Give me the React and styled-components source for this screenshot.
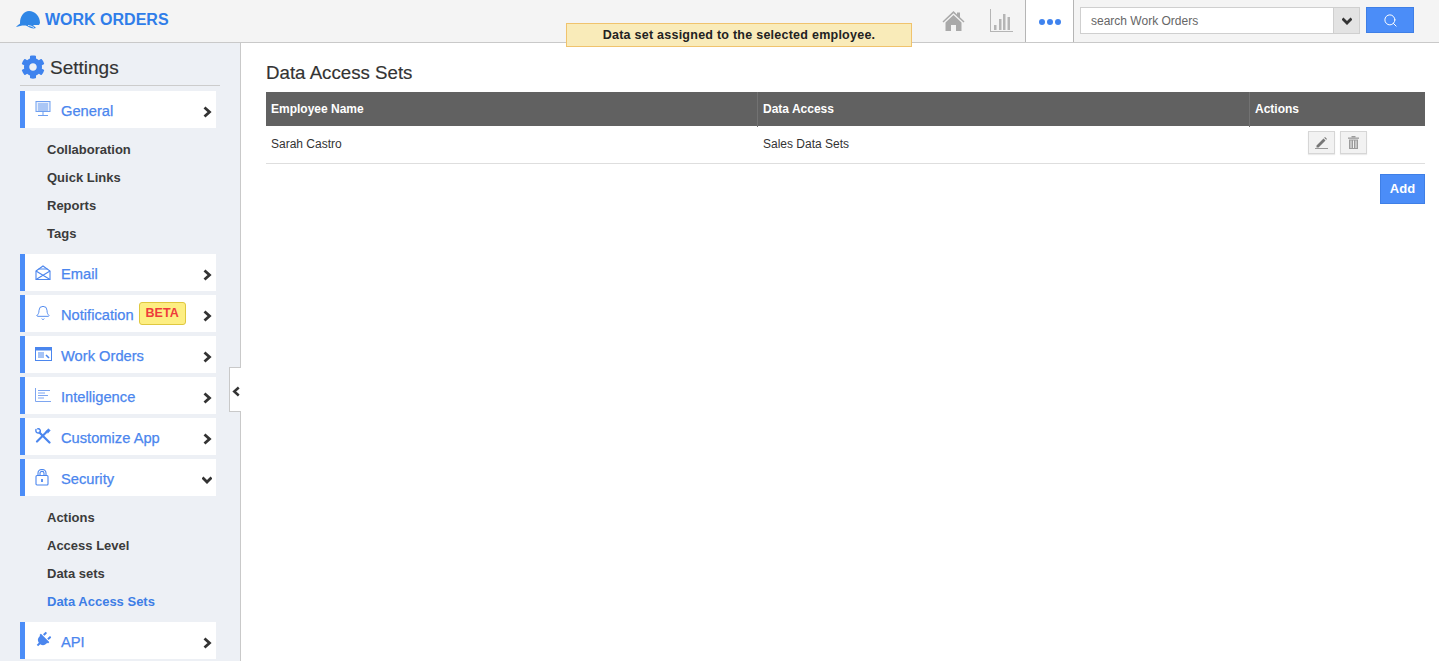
import React from "react";
import styled, { createGlobalStyle } from "styled-components";
import { FaCog, FaPlug } from "react-icons/fa";
import { Bell, Search } from "lucide-react";

const Global = createGlobalStyle`
  html, body { margin: 0; padding: 0; height: 100%; overflow: hidden; background: #fff; }
  * { box-sizing: border-box; }
  body { font-family: "Liberation Sans", Arial, sans-serif; color: #333; }
`;

const Page = styled.div`
  position: relative;
  width: 1439px;
  height: 661px;
  overflow: hidden;
  display: flex;
  flex-direction: column;
`;
const Header = styled.header`
  height: 43px;
  flex: none;
  background: #f4f4f4;
  border-bottom: 1px solid #c9c9c9;
  display: flex;
  align-items: stretch;
  padding-left: 16px;
`;
const Brand = styled.div`
  display: flex;
  align-items: center;
  gap: 4px;
  color: #2f7de9;
  font-size: 16px;
  font-weight: 700;
  height: 40px;
  flex: 1;
`;
const HeadIcon = styled.div`
  width: 48px;
  display: flex;
  align-items: center;
  justify-content: center;
  padding: 0 0 1px 3px;
`;
const MoreTab = styled.div`
  width: 49px;
  margin-left: 1px;
  height: 42px;
  background: #fff;
  border-left: 1px solid #b5b5b5;
  border-right: 1px solid #b5b5b5;
  display: flex;
  align-items: center;
  justify-content: center;
  gap: 2px;
  padding-top: 2px;
`;
const Dot = styled.i`
  width: 6px;
  height: 6px;
  border-radius: 50%;
  background: #3f83ee;
`;
const SearchArea = styled.div`
  display: flex;
  align-items: flex-start;
  padding: 7px 25px 0 6px;
`;
const SearchInput = styled.div`
  width: 253px;
  height: 27px;
  background: #fff;
  border: 1px solid #cfcfcf;
  border-right: none;
  color: #666;
  font-size: 12px;
  line-height: 27px;
  padding-left: 10px;
`;
const SelectBtn = styled.div`
  width: 27px;
  height: 27px;
  background: #e3e3e3;
  border: 1px solid #cfcfcf;
  display: flex;
  align-items: center;
  justify-content: center;
`;
const SearchBtn = styled.div`
  width: 48px;
  height: 26px;
  margin-left: 6px;
  background: #4b8df8;
  border: 1px solid #3f7fe6;
  display: flex;
  align-items: center;
  justify-content: center;
`;
const Toast = styled.div`
  position: absolute;
  left: 566px;
  top: 23px;
  width: 346px;
  height: 24px;
  background: #f9ebb9;
  border: 1px solid #f0c36d;
  color: #222;
  font-size: 12.5px;
  font-weight: 700;
  letter-spacing: 0.25px;
  line-height: 22px;
  text-align: center;
`;
const Body = styled.div`
  flex: 1;
  display: flex;
  min-height: 0;
`;
const Sidebar = styled.aside`
  position: relative;
  width: 241px;
  flex: none;
  background: #edf0f5;
  border-right: 1px solid #c9c9c9;
  padding: 0 20px 0 20px;
`;
const SideTitle = styled.div`
  height: 43px;
  width: 200px;
  border-bottom: 1px solid #ccc;
  display: flex;
  align-items: center;
  gap: 5px;
  font-size: 19px;
  color: #333;
  -webkit-text-stroke: 0.15px #333;
  margin-bottom: 5px;
  padding: 8px 0 0 1px;
`;
const Gear = styled(FaCog)`
  margin-top: -3px;
`;
const NavItem = styled.div`
  width: 196px;
  height: 37px;
  margin-bottom: 4px;
  background: #fff;
  border-left: 5px solid #4b8df8;
  display: flex;
  align-items: center;
  color: #4b86ee;
  font-size: 14.7px;
  padding-top: 2px;
  -webkit-text-stroke: 0.25px #4b86ee;
  position: relative;
`;
const NavIcon = styled.span`
  width: 36px;
  flex: none;
  padding-left: 10px;
  margin-top: -3px;
  display: flex;
  align-items: center;
`;
const Chevron = styled.span`
  position: absolute;
  right: 4px;
  top: 15px;
  display: flex;
`;
const Beta = styled.span`
  margin: -2px 0 0 5px;
  width: 47px;
  height: 23px;
  background: #fdee82;
  border: 1px solid #dfc83f;
  border-radius: 3px;
  color: #ee3b3b;
  -webkit-text-stroke: 0;
  font-size: 12.5px;
  font-weight: 700;
  text-align: center;
  line-height: 21px;
`;
const SubList = styled.div`
  padding: 3px 0 7px 27px;
`;
const SubLink = styled.div`
  height: 28px;
  line-height: 30px;
  font-size: 13px;
  font-weight: 700;
  color: ${p => (p.$active ? "#3d7ee6" : "#3b3b3b")};
`;
const Collapse = styled.div`
  position: absolute;
  right: -1px;
  top: 324px;
  width: 12px;
  height: 45px;
  background: #fff;
  border: 1px solid #c9c9c9;
  border-right: none;
  padding: 4px 0 0 1px;
  display: flex;
  align-items: center;
  justify-content: center;
`;
const Main = styled.main`
  flex: 1;
  padding: 20px 14px 0 25px;
`;
const Title = styled.h1`
  margin: 0;
  height: 29px;
  font-size: 18.7px;
  line-height: 20px;
  font-weight: 400;
  color: #333;
  -webkit-text-stroke: 0.15px #333;
`;
const Row = styled.div`
  display: grid;
  grid-template-columns: 492px 492px 1fr;
`;
const HeadRow = styled(Row)`
  height: 34px;
  background: #616161;
`;
const HeadCell = styled.div`
  color: #fff;
  font-size: 12px;
  font-weight: 700;
  line-height: 35px;
  padding-left: 5px;
  border-right: 1px solid ${p => (p.$last ? "transparent" : "#727272")};
`;
const DataRow = styled(Row)`
  height: 38px;
  border-bottom: 1px solid #dedede;
`;
const DataCell = styled.div`
  font-size: 12px;
  color: #333;
  line-height: 37px;
  padding-left: 5px;
`;
const Actions = styled.div`
  display: flex;
  gap: 5px;
  padding: 5px 0 0 58px;
`;
const IconBtn = styled.div`
  width: 27px;
  height: 23px;
  background: #f2f2f2;
  border: 1px solid #d6d6d6;
  box-shadow: 0 1px 1px rgba(0,0,0,.08);
  display: flex;
  align-items: center;
  justify-content: center;
`;
const Footer = styled.div`
  display: flex;
  justify-content: flex-end;
  padding-top: 10px;
`;
const AddBtn = styled.div`
  width: 45px;
  height: 30px;
  background: #4b8df8;
  border: 1px solid #3f7fe6;
  color: #fff;
  font-size: 13px;
  font-weight: 700;
  line-height: 28px;
  text-align: center;
`;

const Chev = ({ dir = "right", w = 10, color = "#333" }) => (
  <svg width={w} height={w + 2} viewBox="0 0 10 12" fill="none" stroke={color} strokeWidth="2.8">
    {dir === "right" && <path d="M2.500 1.500 7.500 6l-5 4.500" />}
    {dir === "left" && <path d="M7.500 1.500 2.500 6l5 4.500" />}
    {dir === "down" && <path d="M.5 3.500 5 8l4.500-4.500" />}
  </svg>
);
const Logo = () => (
  <svg width="25" height="20" viewBox="0 0 25 20">
    <path d="M4 13C4 6 8 1 13 1c6 0 11 5 11 12l-1 2-7 0c-4-1-8-1-12 0z" fill="#2f86e6" />
    <path d="M5 13c-2 1-4 3-5 4 4-1 8-2 11-1 3 2 6 3 9 2l-3-3c-4-2-8-3-12-2z" fill="#2f86e6" />
    <path d="M12 15.500c2 0 4 1 6 2" stroke="#fff" strokeWidth=".8" fill="none" />
  </svg>
);
const Home = () => (
  <svg width="23" height="22" viewBox="0 0 23 22" fill="#a9a9a9">
    <path d="M11.500 1 0.500 11.500l1 1L11.500 3.200l10 9.300 1-1L18 7.200V2.500h-3v1.900z" />
    <path d="M3.500 12.500 11.500 5l8 7.500V21h-5.500v-6h-5v6H3.500z" />
  </svg>
);
const Chart = () => (
  <svg width="23" height="23" viewBox="0 0 23 23" fill="#b5b5b5">
    <rect x="0" y="0" width="1" height="23" />
    <rect x="0" y="22" width="23" height="1" />
    <rect x="4" y="16" width="2.500" height="5" />
    <rect x="9" y="10" width="2.500" height="11" />
    <rect x="13" y="5" width="2.500" height="16" />
    <rect x="17.500" y="8" width="2.500" height="13" />
  </svg>
);
const Monitor = () => (
  <svg width="16" height="16" viewBox="0 0 16 16" fill="none" stroke="#6f9ff0" strokeWidth="1">
    <rect x="1" y=".5" width="14" height="10" fill="#e6eefc" />
    <path d="M3 3h10M3 5h10M3 7h10M3 9h10M8 11v3M3 14.500h10" />
  </svg>
);
const Mail = () => (
  <svg width="16" height="15" viewBox="0 0 16 15" fill="none" stroke="#4b86ee" strokeWidth="1.100">
    <path d="M1 6 8 1l7 5v8.500H1z" />
    <path d="M1 6l14 8.500M15 6 1 14.500M3.500 4h9" />
  </svg>
);
const Browser = () => (
  <svg width="17" height="14" viewBox="0 0 17 14" fill="none" stroke="#4b86ee">
    <rect x=".5" y=".5" width="16" height="13" />
    <rect x="1" y="1" width="15" height="2" fill="#4b86ee" />
    <path d="M3 6h6M3 8h6M3 10h6" />
    <path d="M11 8l3 3" strokeWidth="1.600" />
  </svg>
);
const Lines = () => (
  <svg width="16" height="14" viewBox="0 0 16 14" fill="none" stroke="#7ea6f0">
    <path d="M.5 0v13.500H16M3 2.500h12M3 5h7M3 7.500h10M3 10h6" />
  </svg>
);
const Tools = () => (
  <svg width="16" height="16" viewBox="0 0 16 16" fill="none" stroke="#4b86ee" strokeLinecap="round">
    <path d="M4.500 4.500 14.500 14.500" strokeWidth="2.200" />
    <path d="M1 1.500c-.5 2 .5 4 3.500 3.500M2.800.8C4.800.5 6 2.500 5 4.500" strokeWidth="1.400" />
    <path d="M11.500 4 2 13.500" strokeWidth="2.200" />
    <path d="M11 3 13.500.8 15.200 2.500 13 5z" fill="#4b86ee" strokeWidth=".6" />
  </svg>
);
const LockIcon = () => (
  <svg width="14" height="17" viewBox="0 0 14 17" fill="none" stroke="#4b86ee" strokeWidth="1.100">
    <rect x="1" y="6.500" width="12" height="9.500" rx="1" />
    <path d="M3 6.500V4a4 3.500 0 0 1 8 0v2.500M5 6.500V4.200a2 1.800 0 0 1 4 0v2.300" />
    <path d="M7 10v3" strokeWidth="1.800" />
  </svg>
);
const Pencil = () => (
  <svg width="13" height="13" viewBox="0 0 13 13" fill="#777">
    <path d="M1.500 9.500 8.500 2.500l2 2-7 7H1.500zM9.200 1.800l.8-.8 2 2-.8.800z" />
    <rect x="0" y="12" width="13" height="1" fill="#999" />
  </svg>
);
const Trash = () => (
  <svg width="11" height="13" viewBox="0 0 11 13" fill="#9b9b9b">
    <rect x="0" y="1.500" width="11" height="1.300" />
    <rect x="3.500" y="0" width="4" height="1.500" />
    <path d="M1 3.500h9V13H1zM2.500 4.500v7.500h1V4.500zM5 4.500v7.500h1V4.500zM7.500 4.500v7.500h1V4.500z" fillRule="evenodd" />
  </svg>
);

const NAV = (icon, label, extra, dir = "right") => (
  <NavItem key={label}>
    <NavIcon>{icon}</NavIcon>
    {label}
    {extra}
    <Chevron><Chev dir={dir} /></Chevron>
  </NavItem>
);

export default function App() {
  return (
    <Page>
      <Global />
      <Header>
        <Brand><Logo /><span>WORK ORDERS</span></Brand>
        <HeadIcon><Home /></HeadIcon>
        <HeadIcon><Chart /></HeadIcon>
        <MoreTab><Dot /><Dot /><Dot /></MoreTab>
        <SearchArea>
          <SearchInput>search Work Orders</SearchInput>
          <SelectBtn><Chev dir="down" w={10} /></SelectBtn>
          <SearchBtn><Search size={15} color="#fff" strokeWidth={1.6} /></SearchBtn>
        </SearchArea>
      </Header>
      <Toast>Data set assigned to the selected employee.</Toast>
      <Body>
        <Sidebar>
          <SideTitle><Gear size={24} color="#3f83ee" />Settings</SideTitle>
          {NAV(<Monitor />, "General")}
          <SubList>
            <SubLink>Collaboration</SubLink>
            <SubLink>Quick Links</SubLink>
            <SubLink>Reports</SubLink>
            <SubLink>Tags</SubLink>
          </SubList>
          {NAV(<Mail />, "Email")}
          {NAV(<Bell size={16} color="#4b86ee" strokeWidth={1.4} />, "Notification", <Beta>BETA</Beta>)}
          {NAV(<Browser />, "Work Orders")}
          {NAV(<Lines />, "Intelligence")}
          {NAV(<Tools />, "Customize App")}
          {NAV(<LockIcon />, "Security", null, "down")}
          <SubList>
            <SubLink>Actions</SubLink>
            <SubLink>Access Level</SubLink>
            <SubLink>Data sets</SubLink>
            <SubLink $active>Data Access Sets</SubLink>
          </SubList>
          {NAV(<FaPlug size={16} color="#4b86ee" style={{ transform: "rotate(45deg)" }} />, "API")}
          <Collapse><Chev dir="left" w={9} /></Collapse>
        </Sidebar>
        <Main>
          <Title>Data Access Sets</Title>
          <HeadRow>
            <HeadCell>Employee Name</HeadCell>
            <HeadCell>Data Access</HeadCell>
            <HeadCell $last>Actions</HeadCell>
          </HeadRow>
          <DataRow>
            <DataCell>Sarah Castro</DataCell>
            <DataCell>Sales Data Sets</DataCell>
            <Actions>
              <IconBtn><Pencil /></IconBtn>
              <IconBtn><Trash /></IconBtn>
            </Actions>
          </DataRow>
          <Footer><AddBtn>Add</AddBtn></Footer>
        </Main>
      </Body>
    </Page>
  );
}
